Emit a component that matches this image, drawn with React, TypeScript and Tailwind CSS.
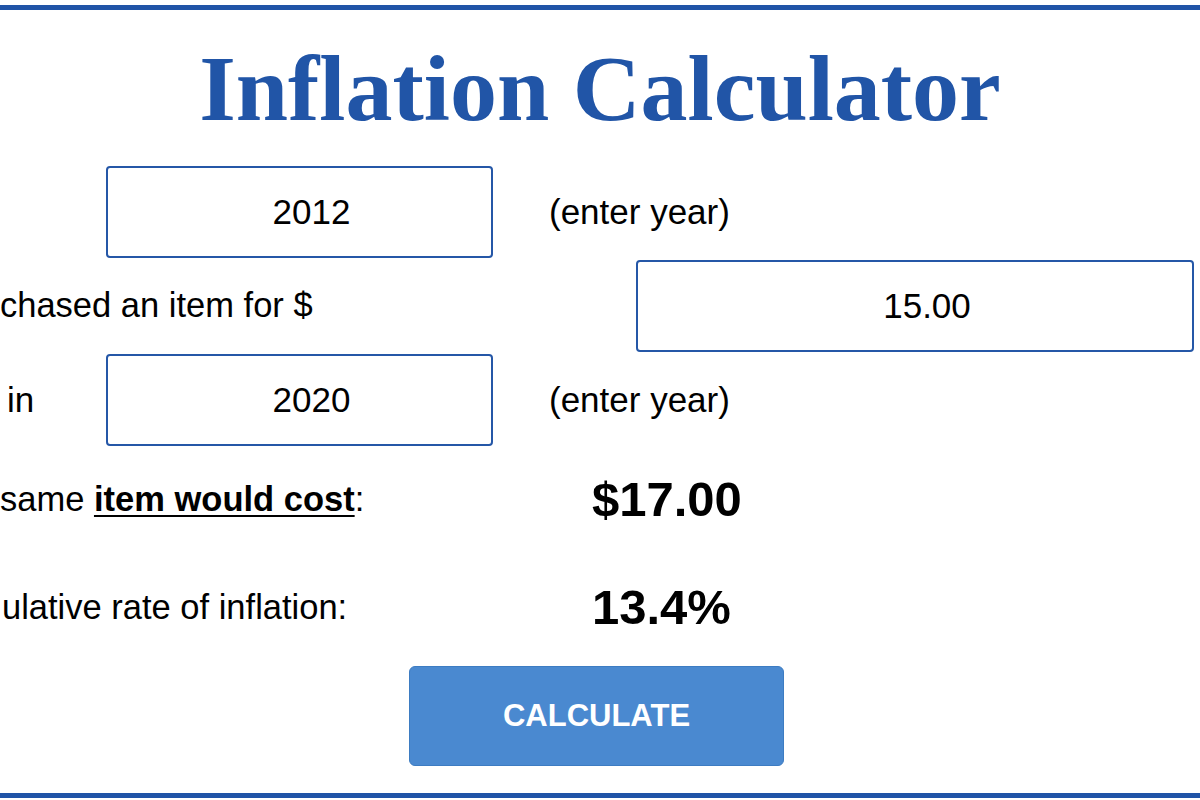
import React from "react";

const sans = { fontFamily: '"Liberation Sans", Arial, sans-serif' };

function YearBox({ value }: { value: string }) {
  return (
    <input
      defaultValue={value}
      className="h-[92px] w-[387px] rounded-[4px] border-2 border-[#2557a7] bg-white pl-[24px] text-center text-[35px] text-black outline-none"
      style={sans}
    />
  );
}

export default function App() {
  return (
    <div className="h-[800px] w-[1200px] overflow-hidden bg-white pt-[5px]" style={sans}>
      <div className="flex h-[793px] flex-col border-y-[5px] border-[#2054a7]">
        <h1
          className="mt-[31px] h-[124px] text-center text-[94px] font-bold leading-[94px] text-[#2155a7]"
          style={{ fontFamily: '"Liberation Serif", "Times New Roman", serif' }}
        >
          Inflation Calculator
        </h1>

        {/* start year */}
        <div className="flex h-[94px] items-center">
          <div className="w-[106px]" />
          <YearBox value="2012" />
          <span className="pl-[56px] text-[35px] text-black">(enter year)</span>
        </div>

        {/* purchase amount */}
        <div className="flex h-[94px] items-center">
          <span className="w-[636px] text-[34.5px] text-black">chased an item for $</span>
          <input
            defaultValue="15.00"
            className="h-[92px] w-[558px] rounded-[4px] border-2 border-[#2557a7] bg-white pl-[24px] text-center text-[35px] text-black outline-none"
            style={sans}
          />
        </div>

        {/* end year */}
        <div className="flex h-[94px] items-center">
          <span className="w-[106px] pl-[7px] text-[35px] text-black">in</span>
          <YearBox value="2020" />
          <span className="pl-[56px] text-[35px] text-black">(enter year)</span>
        </div>

        {/* results */}
        <div className="flex h-[106px] items-center">
          <span className="w-[592px] text-[34.5px] text-black">
            same <b className="underline decoration-2 underline-offset-[4px]">item would cost</b>:
          </span>
          <span className="text-[49px] font-bold text-black">$17.00</span>
        </div>
        <div className="flex h-[110px] items-center">
          <span className="w-[592px] pl-[2px] text-[34.5px] text-black">ulative rate of inflation:</span>
          <span className="text-[49px] font-bold text-black">13.4%</span>
        </div>

        <div className="flex pt-[3px]">
          <button className="ml-[409px] flex h-[100px] w-[375px] items-center justify-center rounded-[6px] border border-[#3d7cc2] bg-[#4a89d0] text-[31px] font-bold text-white">
            CALCULATE
          </button>
        </div>
      </div>
    </div>
  );
}
